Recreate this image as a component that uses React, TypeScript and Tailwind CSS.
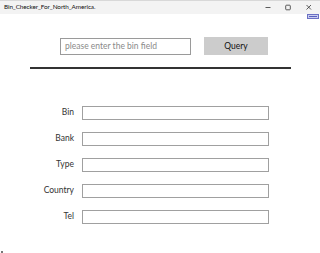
import React from "react";

const fields = [
  { label: "Bin" },
  { label: "Bank" },
  { label: "Type" },
  { label: "Country" },
  { label: "Tel" },
];

export default function App() {
  return (
    <div
      className="relative w-[320px] h-[253px] bg-white overflow-hidden flex flex-col"
      style={{ fontFamily: 'Lato, "Noto Sans", sans-serif' }}
    >
      {/* Title bar */}
      <div className="h-[14px] bg-[#f3f3f3] border-t border-[#d8d8d8] flex items-center pl-[4px] shrink-0">
        <span className="text-[6.4px] leading-none text-[#111] tracking-[-0.1px]">
          Bin_Checker_For_North_America.
        </span>
        <div className="ml-auto flex items-center h-full">
          <svg width="20" height="13" viewBox="0 0 20 13">
            <line x1="7.5" y1="6.5" x2="12.5" y2="6.5" stroke="#333" strokeWidth="0.8" />
          </svg>
          <svg width="20" height="13" viewBox="0 0 20 13">
            <rect x="7.7" y="4.2" width="4.6" height="4.6" rx="0.8" fill="none" stroke="#333" strokeWidth="0.8" />
          </svg>
          <svg width="22" height="13" viewBox="0 0 22 13">
            <line x1="8.5" y1="4" x2="13" y2="8.5" stroke="#333" strokeWidth="0.8" />
            <line x1="13" y1="4" x2="8.5" y2="8.5" stroke="#333" strokeWidth="0.8" />
          </svg>
        </div>
      </div>

      {/* overlay small blue indicator */}
      <div className="absolute left-[307px] top-[14px] w-[12px] h-[5px] bg-[#c9cdf0] border border-[#6b70c4] flex items-center justify-center">
        <div className="w-[8px] h-[1px] bg-[#5a60c0]" />
      </div>

      {/* Search row */}
      <div className="flex items-start mt-[23px]">
        <div className="ml-[60px] mt-[1px] w-[131px] h-[17px] border border-[#9a9a9a] flex items-center pl-[4px]">
          <span className="text-[8.5px] leading-none text-[#8a8a8a]">please enter the bin field</span>
        </div>
        <div className="ml-[13px] w-[64px] h-[18px] bg-[#cccccc] flex items-center justify-center">
          <span className="text-[8.5px] leading-none text-[#111]">Query</span>
        </div>
      </div>

      {/* Separator */}
      <div className="ml-[30px] mt-[12px] w-[261px] h-[1.5px] bg-[#333]" />

      {/* Fields */}
      <div className="flex flex-col gap-[12px] mt-[37px]">
        {fields.map((f) => (
          <div key={f.label} className="flex items-center h-[14px]">
            <div className="w-[74px] text-right text-[8.5px] leading-none text-[#333]">{f.label}</div>
            <div className="ml-[8px] w-[187px] h-[14px] border border-[#a0a0a0] bg-white" />
          </div>
        ))}
      </div>

      <div className="absolute left-[1px] top-[251px] w-[1.5px] h-[1.5px] bg-[#777]" />
    </div>
  );
}
